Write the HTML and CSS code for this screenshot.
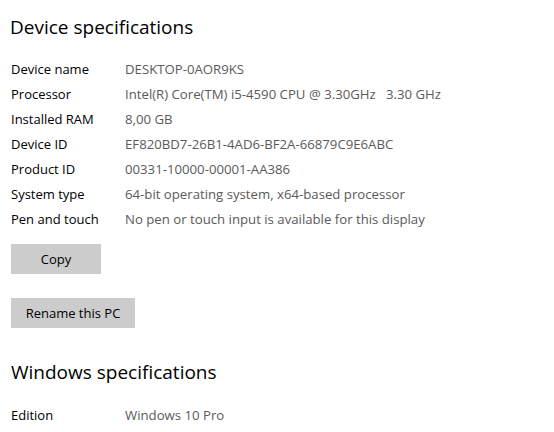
FILE: index.html
```html
<!DOCTYPE html>
<html>
<head>
<meta charset="utf-8">
<link rel="stylesheet" href="styles.css">
</head>
<body>
<div class="page">
  <h1 class="title">Device specifications</h1>
  <div class="specs">
    <div class="label">Device name</div><div class="value">DESKTOP-0AOR9KS</div>
    <div class="label">Processor</div><div class="value">Intel(R) Core(TM) i5-4590 CPU @ 3.30GHz&nbsp;&nbsp;&nbsp;3.30 GHz</div>
    <div class="label">Installed RAM</div><div class="value">8,00 GB</div>
    <div class="label">Device ID</div><div class="value">EF820BD7-26B1-4AD6-BF2A-66879C9E6ABC</div>
    <div class="label">Product ID</div><div class="value">00331-10000-00001-AA386</div>
    <div class="label">System type</div><div class="value">64-bit operating system, x64-based processor</div>
    <div class="label">Pen and touch</div><div class="value">No pen or touch input is available for this display</div>
  </div>
  <button class="btn btn-copy">Copy</button>
  <button class="btn btn-rename">Rename this PC</button>
  <h1 class="title title-win">Windows specifications</h1>
  <div class="specs specs-win">
    <div class="label">Edition</div><div class="value">Windows 10 Pro</div>
  </div>
</div>
</body>
</html>
```
FILE: styles.css
```css
html, body {
  margin: 0;
  padding: 0;
  background: #ffffff;
}
body {
  font-family: "Open Sans", "Noto Sans", sans-serif;
  color: #000;
}
.page {
  display: flex;
  flex-direction: column;
  align-items: flex-start;
  padding: 0 0 0 11px;
}
.title {
  margin: 12px 0 0 -1px;
  font-size: 19px;
  font-weight: 400;
  line-height: 30px;
  color: #000;
}
.specs {
  display: grid;
  grid-template-columns: 114px auto;
  grid-auto-rows: 25px;
  align-items: center;
  margin-top: 15px;
  font-size: 13px;
}
.label {
  color: #000;
  line-height: 25px;
}
.value {
  color: #5a5a5a;
  line-height: 25px;
  font-size: 13.2px;
}
.btn {
  font-family: inherit;
  font-size: 13px;
  border: none;
  background: #cccccc;
  color: #000;
  height: 30px;
  padding: 0;
}
.btn-copy {
  width: 90px;
  margin-top: 12px;
}
.btn-rename {
  width: 124px;
  margin-top: 24px;
}
.title-win {
  margin: 29px 0 0 0;
}
.specs-win {
  margin-top: 16px;
}
```
